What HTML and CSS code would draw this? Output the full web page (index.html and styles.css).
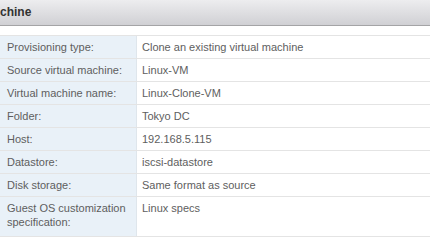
FILE: index.html
```html
<html lang="en">
  <head>
    <meta charset="utf-8">
    <link rel="stylesheet" href="styles.css">
  </head>
  <body>
    <div class="title-bar">chine</div>
    <div class="summary">
      <div class="row"><div class="key">Provisioning type:</div><div class="value">Clone an existing virtual machine</div></div>
      <div class="row"><div class="key">Source virtual machine:</div><div class="value">Linux-VM</div></div>
      <div class="row"><div class="key">Virtual machine name:</div><div class="value">Linux-Clone-VM</div></div>
      <div class="row"><div class="key">Folder:</div><div class="value">Tokyo DC</div></div>
      <div class="row"><div class="key">Host:</div><div class="value">192.168.5.115</div></div>
      <div class="row"><div class="key">Datastore:</div><div class="value">iscsi-datastore</div></div>
      <div class="row"><div class="key">Disk storage:</div><div class="value">Same format as source</div></div>
      <div class="row tall"><div class="key">Guest OS customization specification:</div><div class="value">Linux specs</div></div>
    </div>
  </body>
</html>
```
FILE: styles.css
```css
body {
  margin: 0;
  background-color: #fff;
  color: #5e5e5e;
  font-family: "Liberation Sans", Arial, sans-serif;
  font-size: 11px;
  width: 430px;
  height: 244px;
  overflow: hidden;
}

.title-bar {
  height: 25px;
  line-height: 25px;
  border-bottom: 1px solid #a4a4a6;
  background: linear-gradient(#ededef, #d0d0d4);
  color: #333;
  font-weight: bold;
  font-size: 12px;
}

.summary {
  margin-top: 9px;
  border-top: 1px solid #e4e4e4;
}

.row {
  display: flex;
  height: 22px;
  border-bottom: 1px solid #e4e4e4;
}

.row.tall {
  height: 39px;
}

.key {
  width: 129px;
  padding: 4px 0 0 7px;
  background-color: #e9f1f8;
  border-right: 1px solid #dfe6ec;
  line-height: 14px;
}

.value {
  flex: 1;
  padding: 4px 0 0 5px;
  line-height: 14px;
}
```
